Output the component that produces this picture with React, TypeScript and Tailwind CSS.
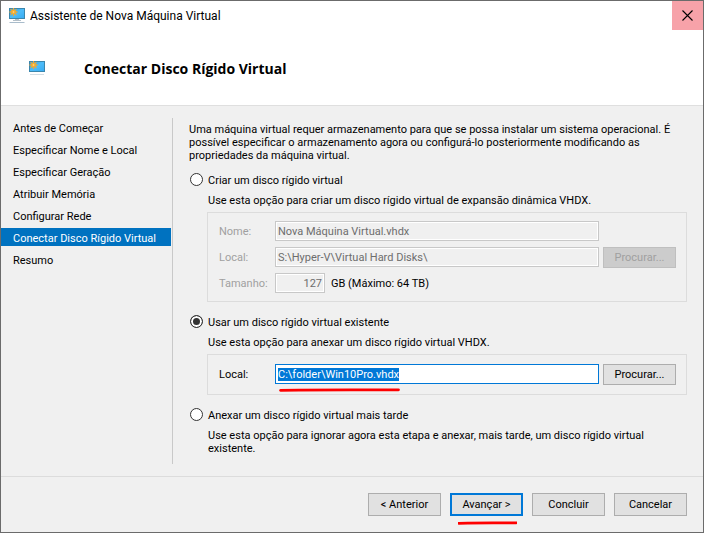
import { useEffect, useRef, type ReactNode } from "react";

const steps = [
  "Antes de Começar",
  "Especificar Nome e Local",
  "Especificar Geração",
  "Atribuir Memória",
  "Configurar Rede",
  "Conectar Disco Rígido Virtual",
  "Resumo",
];
const currentStep = 5;

const disabledField =
  "h-5 min-w-0 border border-[#c8c8c8] bg-[#f0f0f0] px-[2px] leading-[13px] text-[#6d6d6d] shadow-[inset_0_0_0_1px_#fff]";

function MonitorIcon({ className, stand }: { className: string; stand: boolean }) {
  return (
    <svg className={className} viewBox="0 0 16 16" aria-hidden="true">
      <defs>
        <linearGradient id="screen" x1="0" y1="0" x2="1" y2="1">
          <stop offset="0" stopColor="#2f9fe2" />
          <stop offset="0.5" stopColor="#4dbcf9" />
          <stop offset="1" stopColor="#36aaf2" />
        </linearGradient>
      </defs>
      <rect x="0.5" y="0.5" width="15" height="10" fill="url(#screen)" stroke="#3a86ad" />
      {stand && <path d="M6 11h4v1h2v1H4v-1h2z" fill="#b4c0c9" />}
      <path d={stand ? "M1 14h14l1 1H0z" : "M1 13h14v1H1z"} fill={stand ? "#a9bccb" : "#d3dde4"} />
      <path
        d="M4.5 0v8M.5 4h8M1.6 1.1l5.8 5.8M7.4 1.1L1.6 6.9"
        stroke="#f0a830"
        strokeWidth="1.3"
      />
      <circle cx="4.5" cy="4" r="2.3" fill="#f5ac30" />
      <circle cx="4.5" cy="4" r="0.9" fill="#fbd078" />
    </svg>
  );
}

function RedMark({ className }: { className: string }) {
  return (
    <svg className={`pointer-events-none absolute ${className}`} viewBox="0 0 120 4" preserveAspectRatio="none" aria-hidden="true">
      <path d="M1.5 2.3C30 1.6 80 2 118.5 1.8" fill="none" stroke="#fe0000" strokeWidth="2.8" strokeLinecap="round" vectorEffect="non-scaling-stroke" />
    </svg>
  );
}

function DiskOption({
  id,
  label,
  description,
  checked,
  children,
}: {
  id: string;
  label: string;
  description: string;
  checked?: boolean;
  children?: ReactNode;
}) {
  return (
    <section>
      <div className="flex h-[13px] items-start gap-[5px] pl-px">
        <input
          id={id}
          type="radio"
          name="disk"
          defaultChecked={checked}
          className="size-[13px] shrink-0 appearance-none rounded-full border border-[#333] bg-white checked:bg-[#333] checked:shadow-[inset_0_0_0_2px_#fff]"
        />
        <label htmlFor={id} className="leading-[15px]">{label}</label>
      </div>
      <p className="mt-2 pl-[19px]">{description}</p>
      {children}
    </section>
  );
}

function BrowseButton({ disabled }: { disabled?: boolean }) {
  return (
    <button
      type="button"
      disabled={disabled}
      className="h-[21px] w-[73px] shrink-0 border border-[#adadad] bg-[#e1e1e1] leading-[13px] disabled:border-[#bfbfbf] disabled:bg-[#ccc] disabled:text-[#a0a0a0]"
    >
      Procurar...
    </button>
  );
}

export default function App() {
  const path = useRef<HTMLInputElement>(null);
  useEffect(() => {
    path.current?.focus();
    path.current?.select();
  }, []);

  const footerButton = "h-[23px] w-[73px] border border-[#adadad] bg-[#e1e1e1]";

  return (
    <div className="flex min-h-screen flex-col border border-[#6b6b6b] bg-[#f0f0f0] font-['Roboto','Noto_Sans',sans-serif] text-[11px] leading-[13px] text-black">
      <header className="border-b border-[#dfdfdf] bg-white">
        <div className="flex h-[29px] items-center pl-2">
          <MonitorIcon className="size-4" stand />
          <span className="flex-1 pl-[5px] text-[12px] leading-4">Assistente de Nova Máquina Virtual</span>
          <button type="button" aria-label="Fechar" className="flex h-full w-[31px] items-center justify-center bg-[#f7a2a9]">
            <svg className="size-[11px]" viewBox="0 0 11 11" aria-hidden="true">
              <path d="M.5 .5l10 10M10.5 .5l-10 10" stroke="#000" strokeWidth="1.1" />
            </svg>
          </button>
        </div>
        <div className="flex h-[75px] items-center pl-7 pt-[3px]">
          <MonitorIcon className="size-4" stand={false} />
          <h1 className="pl-[39px] font-['Open_Sans','Noto_Sans',sans-serif] text-[14px] font-bold leading-5">Conectar Disco Rígido Virtual</h1>
        </div>
      </header>

      <main className="flex flex-1 py-3">
        <nav className="w-[170px] shrink-0">
          <ol className="flex flex-col gap-1">
            {steps.map((step, i) => (
              <li
                key={step}
                aria-current={i === currentStep ? "step" : undefined}
                className={
                  i === currentStep
                    ? "h-[18px] bg-[#0072c0] pl-3 leading-[22px] text-white"
                    : "h-[18px] pl-3 leading-[22px]"
                }
              >
                {step}
              </li>
            ))}
          </ol>
        </nav>

        <div className="ml-px flex-1 border-l border-[#c9c9c9] px-4 pt-[5px]">
          <p>
            Uma máquina virtual requer armazenamento para que se possa instalar um sistema operacional. É possível
            especificar o armazenamento agora ou configurá-lo posteriormente modificando as propriedades da máquina
            virtual.
          </p>

          <div className="mt-[11px] flex flex-col gap-[13px]">
            <DiskOption
              id="create"
              label="Criar um disco rígido virtual"
              description="Use esta opção para criar um disco rígido virtual de expansão dinâmica VHDX."
            >
              <div className="ml-[18px] mt-[5px] flex flex-col gap-[6px] border border-[#dcdcdc] py-2 pl-[11px] pr-[10px] leading-[22px]">
                <div className="flex h-5 gap-1">
                  <label htmlFor="name" className="w-[52px] shrink-0 text-[#a0a0a0]">Nome:</label>
                  <input id="name" disabled defaultValue="Nova Máquina Virtual.vhdx" className={`${disabledField} mr-[77px] flex-1`} />
                </div>
                <div className="flex h-5 gap-1">
                  <label htmlFor="location" className="w-[52px] shrink-0 text-[#a0a0a0]">Local:</label>
                  <input id="location" disabled defaultValue="S:\Hyper-V\Virtual Hard Disks\" className={`${disabledField} flex-1`} />
                  <BrowseButton disabled />
                </div>
                <div className="flex h-5 gap-1">
                  <label htmlFor="size" className="w-[52px] shrink-0 text-[#a0a0a0]">Tamanho:</label>
                  <input id="size" disabled defaultValue="127" className={`${disabledField} w-[50px] text-right`} />
                  <span className="pl-[2px]">GB (Máximo: 64 TB)</span>
                </div>
              </div>
            </DiskOption>

            <DiskOption
              id="existing"
              checked
              label="Usar um disco rígido virtual existente"
              description="Use esta opção para anexar um disco rígido virtual VHDX."
            >
              <div className="ml-[18px] mt-[5px] flex h-[41px] gap-1 border border-[#dcdcdc] py-[9px] pl-[11px] pr-[10px] leading-[22px]">
                <label htmlFor="path" className="w-[52px] shrink-0">Local:</label>
                <div className="relative flex-1">
                  <input
                    id="path"
                    ref={path}
                    defaultValue="C:\folder\Win10Pro.vhdx"
                    className="block h-5 w-full border border-[#0078d7] bg-white px-[2px] leading-[13px] caret-transparent outline-none selection:bg-[#0078d7] selection:text-white"
                  />
                  <RedMark className="left-1 top-6 h-1 w-[121px]" />
                </div>
                <BrowseButton />
              </div>
            </DiskOption>

            <DiskOption
              id="later"
              label="Anexar um disco rígido virtual mais tarde"
              description="Use esta opção para ignorar agora esta etapa e anexar, mais tarde, um disco rígido virtual existente."
            />
          </div>
        </div>
      </main>

      <footer className="flex justify-end gap-[9px] border-t border-[#dcdcdc] px-4 py-4">
        <button type="button" className={footerButton}>&lt; Anterior</button>
        <div className="relative">
          <button type="button" className="h-[23px] w-[73px] border-2 border-[#0078d7] bg-[#e1e1e1]">Avançar &gt;</button>
          <RedMark className="left-2 top-7 h-1 w-[59px]" />
        </div>
        <button type="button" className={footerButton}>Concluir</button>
        <button type="button" className={footerButton}>Cancelar</button>
      </footer>
    </div>
  );
}
